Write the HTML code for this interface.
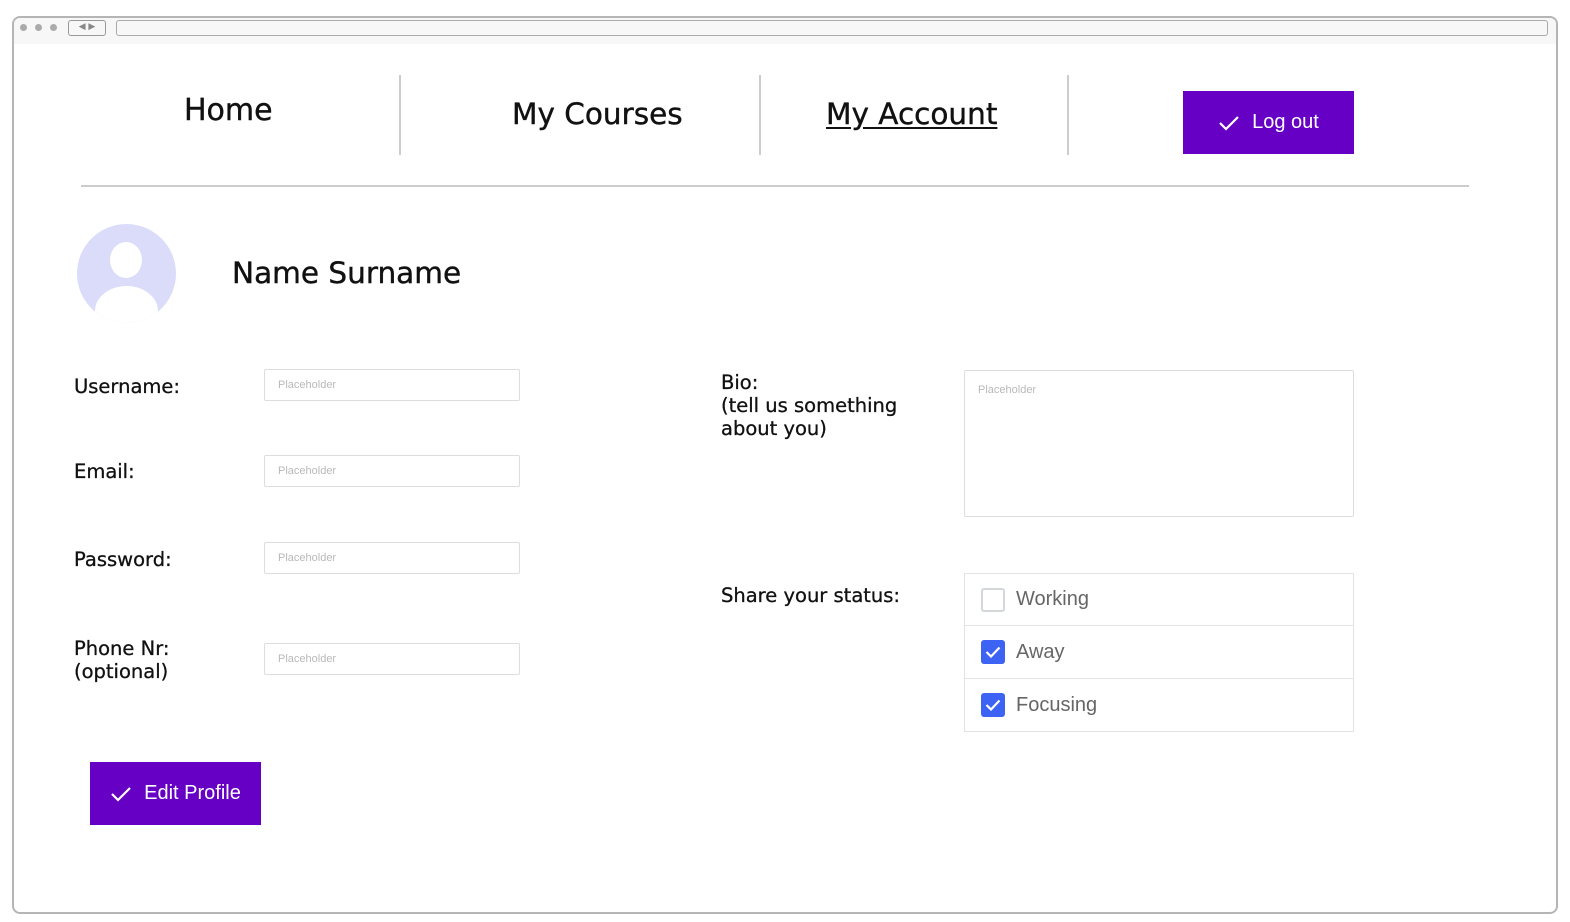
<!DOCTYPE html>
<html><head><style>
*{margin:0;padding:0;box-sizing:border-box}
body{width:1570px;height:922px;background:#fff;position:relative;overflow:hidden;font-family:"DejaVu Sans","Liberation Sans",sans-serif;color:#111}
.a{position:absolute}
.frame{left:12px;top:16px;width:1546px;height:898px;border:2px solid #b5b5b5;border-radius:8px}
.bar{left:14px;top:18px;width:1542px;height:26px;background:#f7f7f7;border-radius:6px 6px 0 0}
.dot{width:7px;height:7px;border-radius:50%;background:#aaa;top:24px}
.nav{color:#111;-webkit-text-stroke:0.4px #111}
.vl{width:2px;background:#ccc;top:75px;height:80px}
.btn{background:#6600c4;color:#fff;font-family:"Liberation Sans",sans-serif;font-size:20px;display:flex;align-items:center;justify-content:center;gap:12px}
.lbl{font-size:19.5px;line-height:23px;color:#111;-webkit-text-stroke:0.3px #111}
.in{width:256px;height:32px;border:1px solid #ddd;border-radius:2px;font-family:"Liberation Sans",sans-serif;font-size:11px;color:#b9b9b9;padding:9px 13px}
.row{left:964px;width:390px;height:53px;border:1px solid #e3e3e3;font-family:"Liberation Sans",sans-serif;font-size:20px;color:#666;display:flex;align-items:center;padding-left:16px;gap:11px}
.cb{width:24px;height:24px;border-radius:3px;background:#3d63f5;display:flex;align-items:center;justify-content:center}
.cb.off{background:#fff;border:2px solid #d3d6da}
</style></head><body>
<div class="a frame"></div>
<div class="a bar"></div>
<div class="a dot" style="left:20px"></div><div class="a dot" style="left:35px"></div><div class="a dot" style="left:50px"></div>
<div class="a" style="left:68px;top:20px;width:38px;height:16px;border:1.5px solid #999;border-radius:3px;font-size:9px;color:#888;text-align:center;line-height:13px">◀ ▶</div>
<div class="a" style="left:116px;top:20px;width:1432px;height:16px;border:1.5px solid #aaa;border-radius:3px"></div>

<div class="a nav" style="left:184px;top:93px;font-size:30px">Home</div>
<div class="a vl" style="left:399px"></div>
<div class="a nav" style="left:512px;top:97px;font-size:29.5px">My Courses</div>
<div class="a vl" style="left:759px"></div>
<div class="a nav" style="left:826px;top:97px;font-size:29.5px;text-decoration:underline;text-underline-offset:3px">My Account</div>
<div class="a vl" style="left:1067px"></div>
<div class="a btn" style="left:1183px;top:91px;width:171px;height:63px"><svg width="22" height="16" viewBox="0 0 22 16"><path d="M2 8l6 6L20 2" fill="none" stroke="#fff" stroke-width="2.2"/></svg>Log out</div>
<div class="a" style="left:81px;top:185px;width:1388px;height:2px;background:#ccc"></div>

<div class="a" style="left:77px;top:224px;width:99px;height:99px;border-radius:50%;background:#dadcfa;overflow:hidden">
<div class="a" style="left:33px;top:18px;width:32px;height:36px;border-radius:50%;background:#fff"></div>
<div class="a" style="left:18px;top:62px;width:63px;height:50px;border-radius:50% 50% 0 0;background:#fff"></div>
</div>
<div class="a nav" style="left:232px;top:256px;font-size:29.5px">Name Surname</div>

<div class="a lbl" style="left:74px;top:375px">Username:</div>
<div class="a in" style="left:264px;top:369px">Placeholder</div>
<div class="a lbl" style="left:74px;top:460px">Email:</div>
<div class="a in" style="left:264px;top:455px">Placeholder</div>
<div class="a lbl" style="left:74px;top:548px">Password:</div>
<div class="a in" style="left:264px;top:542px">Placeholder</div>
<div class="a lbl" style="left:74px;top:637px">Phone Nr:<br>(optional)</div>
<div class="a in" style="left:264px;top:643px">Placeholder</div>

<div class="a lbl" style="left:721px;top:371px">Bio:<br>(tell us something<br>about you)</div>
<div class="a in" style="left:964px;top:370px;width:390px;height:147px;padding:13px 13px">Placeholder</div>
<div class="a lbl" style="left:721px;top:584px">Share your status:</div>
<div class="a row" style="top:573px"><div class="cb off"></div>Working</div>
<div class="a row" style="top:626px;border-top:none"><div class="cb"><svg width="16" height="12" viewBox="0 0 16 12"><path d="M1.5 6l4.5 4.5L14.5 1.5" fill="none" stroke="#fff" stroke-width="2.2"/></svg></div>Away</div>
<div class="a row" style="top:679px;border-top:none"><div class="cb"><svg width="16" height="12" viewBox="0 0 16 12"><path d="M1.5 6l4.5 4.5L14.5 1.5" fill="none" stroke="#fff" stroke-width="2.2"/></svg></div>Focusing</div>

<div class="a btn" style="left:90px;top:762px;width:171px;height:63px"><svg width="22" height="16" viewBox="0 0 22 16"><path d="M2 8l6 6L20 2" fill="none" stroke="#fff" stroke-width="2.2"/></svg>Edit Profile</div>
</body></html>
